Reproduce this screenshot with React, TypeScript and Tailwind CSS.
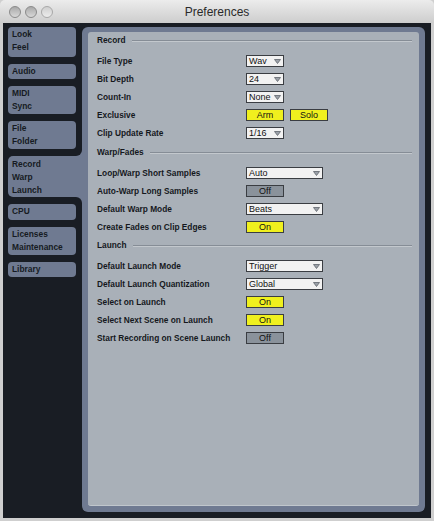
import React from "react";

const FONT = { fontFamily: '"Liberation Sans", Arial, sans-serif' };

function Tab({ lines, h, selected }: { lines: string[]; h: string; selected?: boolean }) {
  if (selected) {
    return (
      <div className={`relative ${h} mr-[-6px] rounded-l-[5px] bg-[#6f7a91] pl-[4px] pt-[2px]`}>
        <div className="absolute right-0 top-[-6px] h-[6px] w-[6px] bg-[#6f7a91]">
          <div className="h-full w-full rounded-br-[6px] bg-[#191d24]" />
        </div>
        <div className="absolute right-0 bottom-[-6px] h-[6px] w-[6px] bg-[#6f7a91]">
          <div className="h-full w-full rounded-tr-[6px] bg-[#191d24]" />
        </div>
        {lines.map((l) => (
          <div key={l} className="text-[8.4px] font-bold leading-[13px] text-[#161a22]">
            {l}
          </div>
        ))}
      </div>
    );
  }
  return (
    <div className={`${h} rounded-[4px] bg-[#6f7a91] pl-[4px] pt-[1px]`}>
      {lines.map((l) => (
        <div key={l} className="text-[8.4px] font-bold leading-[13px] text-[#161a22]">
          {l}
        </div>
      ))}
    </div>
  );
}

function Header({ title, mt }: { title: string; mt: string }) {
  return (
    <div className={`${mt} flex h-[17px] items-center pr-[7px]`}>
      <span className="text-[8.3px] font-bold text-[#15181d]">{title}</span>
      <div className="ml-[6px] flex-1 border-t border-b border-t-[#868d96] border-b-[#c3c8cd]" />
    </div>
  );
}

function Dropdown({ value, wide }: { value: string; wide?: boolean }) {
  return (
    <div
      className={`flex h-[12px] ${wide ? "w-[77px]" : "w-[38px]"} items-center justify-between border border-[#3a3d42] bg-[#f2f2f2] pl-[2px] pr-[2px]`}
    >
      <span className="text-[9px] leading-none text-[#111]">{value}</span>
      <svg width="7" height="5" viewBox="0 0 7 5">
        <polygon points="0.5,0.5 6.5,0.5 3.5,4.5" fill="#9aa0a8" stroke="#60656c" strokeWidth="0.8" />
      </svg>
    </div>
  );
}

function Toggle({ label, on }: { label: string; on: boolean }) {
  return (
    <div
      className={`flex h-[12px] w-[38px] items-center justify-center border border-[#3a3d42] ${
        on ? "bg-[#f0f01e]" : "bg-[#8a929b]"
      }`}
    >
      <span className="text-[9px] leading-none text-[#111]">{label}</span>
    </div>
  );
}

function Row({ label, children }: { label: string; children: React.ReactNode }) {
  return (
    <div className="flex h-[18px] items-center">
      <div className="w-[149px] text-[8.3px] font-bold text-[#15181d]">{label}</div>
      <div className="flex items-center gap-[6px]">{children}</div>
    </div>
  );
}

export default function App() {
  return (
    <div className="flex h-[521px] w-[434px] flex-col bg-[#cfcfcf]" style={FONT}>
      {/* title bar */}
      <div className="relative flex h-[23px] items-center justify-center rounded-t-[5px] bg-gradient-to-b from-[#ececec] to-[#cdcdcd]">
        <div className="absolute left-[9px] top-[6px] flex gap-[4px]">
          <div className="h-[12px] w-[12px] rounded-full border border-[#8a8a8a] bg-gradient-to-b from-[#a9a9a9] to-[#d8d8d8]" />
          <div className="h-[12px] w-[12px] rounded-full border border-[#8a8a8a] bg-gradient-to-b from-[#a9a9a9] to-[#d8d8d8]" />
          <div className="h-[12px] w-[12px] rounded-full border border-[#a8a8a8] bg-gradient-to-b from-[#cfcfcf] to-[#ececec]" />
        </div>
        <span className="text-[12px] text-[#2a2a2a]">Preferences</span>
      </div>

      {/* body */}
      <div className="mx-[3px] mb-[3px] flex flex-1 bg-[#191d24]">
        {/* sidebar */}
        <div className="flex w-[79px] flex-col gap-[7px] pl-[5px] pr-[6px] pt-[4px]">
          <Tab lines={["Look", "Feel"]} h="h-[30px]" />
          <Tab lines={["Audio"]} h="h-[15px]" />
          <Tab lines={["MIDI", "Sync"]} h="h-[28px]" />
          <Tab lines={["File", "Folder"]} h="h-[28px]" />
          <Tab lines={["Record", "Warp", "Launch"]} h="h-[41px]" selected />
          <Tab lines={["CPU"]} h="h-[16px]" />
          <Tab lines={["Licenses", "Maintenance"]} h="h-[28px]" />
          <Tab lines={["Library"]} h="h-[15px]" />
        </div>

        {/* panel */}
        <div className="mb-[6px] mr-[6px] mt-[4px] flex flex-1 rounded-[6px] bg-[#6f7a91] pb-[6px] pl-[6px] pr-[6px] pt-[5px]">
          <div className="flex-1 rounded-[3px] border-b border-b-[#c0c6cc] bg-[#a9b0b8] pl-[9px]">
            <Header title="Record" mt="mt-0" />
            <div className="mt-[3px]">
              <Row label="File Type">
                <Dropdown value="Wav" />
              </Row>
              <Row label="Bit Depth">
                <Dropdown value="24" />
              </Row>
              <Row label="Count-In">
                <Dropdown value="None" />
              </Row>
              <Row label="Exclusive">
                <Toggle label="Arm" on />
                <Toggle label="Solo" on />
              </Row>
              <Row label="Clip Update Rate">
                <Dropdown value="1/16" />
              </Row>
            </div>

            <Header title="Warp/Fades" mt="mt-[2px]" />
            <div className="mt-[3px]">
              <Row label="Loop/Warp Short Samples">
                <Dropdown value="Auto" wide />
              </Row>
              <Row label="Auto-Warp Long Samples">
                <Toggle label="Off" on={false} />
              </Row>
              <Row label="Default Warp Mode">
                <Dropdown value="Beats" wide />
              </Row>
              <Row label="Create Fades on Clip Edges">
                <Toggle label="On" on />
              </Row>
            </div>

            <Header title="Launch" mt="mt-[1px]" />
            <div className="mt-[3px]">
              <Row label="Default Launch Mode">
                <Dropdown value="Trigger" wide />
              </Row>
              <Row label="Default Launch Quantization">
                <Dropdown value="Global" wide />
              </Row>
              <Row label="Select on Launch">
                <Toggle label="On" on />
              </Row>
              <Row label="Select Next Scene on Launch">
                <Toggle label="On" on />
              </Row>
              <Row label="Start Recording on Scene Launch">
                <Toggle label="Off" on={false} />
              </Row>
            </div>
          </div>
        </div>
      </div>
    </div>
  );
}
